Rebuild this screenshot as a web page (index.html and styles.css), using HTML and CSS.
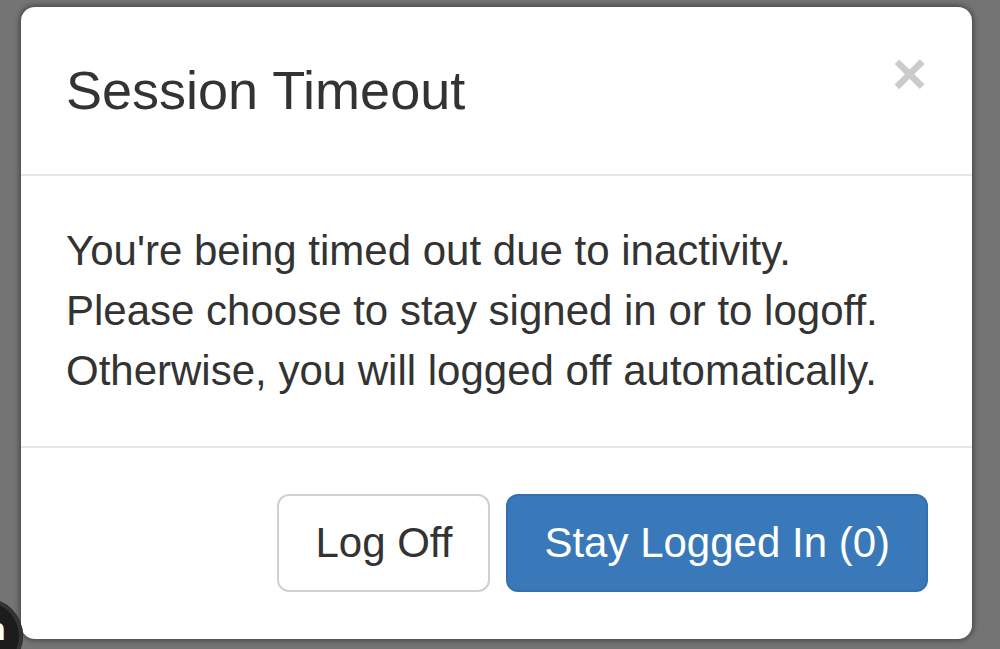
FILE: index.html
```html
<!DOCTYPE html>
<html lang="en">
<head>
<meta charset="utf-8">
<title>Session Timeout</title>
<link rel="stylesheet" href="styles.css">
</head>
<body>
  <div class="modal">
    <div class="modal-header">
      <button class="close" type="button" aria-label="Close">&times;</button>
      <h4 class="modal-title">Session Timeout</h4>
    </div>
    <div class="modal-body">
      You're being timed out due to inactivity.<br>
      Please choose to stay signed in or to logoff.<br>
      Otherwise, you will logged off automatically.
    </div>
    <div class="modal-footer">
      <button class="btn btn-default" type="button">Log Off</button>
      <button class="btn btn-primary" type="button">Stay Logged In (0)</button>
    </div>
  </div>
  <div class="avatar"><span class="avatar-letter">n</span></div>
</body>
</html>
```

FILE: styles.css
```css
html, body {
  margin: 0;
  padding: 0;
  height: 100%;
  overflow: hidden;
}

body {
  background: #747474;
  font-family: "Liberation Sans", Arial, sans-serif;
  color: #333;
  padding: 7px 0 0 21px;
  box-sizing: border-box;
}

.modal {
  position: relative;
  z-index: 1;
  width: 951px;
  background: #fff;
  border-radius: 14px;
  box-shadow: 0 0 5px 2px rgba(0, 0, 0, 0.35);
  display: flex;
  flex-direction: column;
}

.modal-header {
  padding: 45px;
  border-bottom: 2px solid #e5e5e5;
}

.modal-title {
  margin: 0;
  font-size: 54px;
  line-height: 77px;
  font-weight: normal;
  color: #333;
}

.close {
  float: right;
  margin-top: -8px;
  padding: 0;
  border: 0;
  background: transparent;
  font-family: "Liberation Sans", Arial, sans-serif;
  font-size: 60px;
  font-weight: bold;
  line-height: 1;
  color: #000;
  opacity: 0.2;
}

.modal-body {
  padding: 45px;
  font-size: 42px;
  line-height: 60px;
  color: #333;
}

.modal-footer {
  padding: 46px 44px 47px;
  border-top: 2px solid #e5e5e5;
  display: flex;
  justify-content: flex-end;
  gap: 16px;
}

.btn {
  font-family: "Liberation Sans", Arial, sans-serif;
  font-size: 42px;
  line-height: 60px;
  padding: 17px 36px;
  border-radius: 12px;
  border: 2px solid transparent;
  cursor: pointer;
}

.btn-default {
  background: #fff;
  border-color: #d0d0d0;
  color: #333;
}

.btn-primary {
  background: #3a79b9;
  border-color: #3370ad;
  color: #fff;
}

.avatar {
  position: fixed;
  z-index: 2;
  left: -53px;
  top: 598px;
  width: 76px;
  height: 76px;
  border-radius: 50%;
  background: #1c1c1c;
  box-shadow: inset 0 0 0 4px #333;
  overflow: hidden;
}

.avatar-letter {
  position: absolute;
  left: 39px;
  top: 15px;
  font-size: 32px;
  font-weight: bold;
  line-height: 1;
  color: #fff;
}
```
